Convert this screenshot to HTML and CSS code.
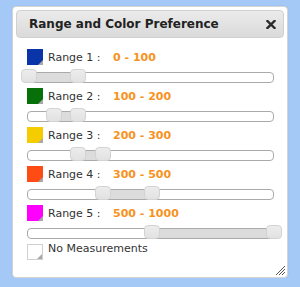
FILE: index.html
```html
<!DOCTYPE html>
<html lang="en">
<head>
    <meta charset="UTF-8">
    <title>Range and Color Preference</title>
    <link rel="stylesheet" href="styles.css">
</head>
<body>
    <div class="dialog">
        <div class="titlebar">
            <span class="title">Range and Color Preference</span>
            <span class="close">
                <svg width="10" height="9" viewBox="0 0 10 9">
                    <path d="M1.5 1 L8.5 8 M8.5 1 L1.5 8" stroke="#2b2b2b" stroke-width="2.4" stroke-linecap="square"/>
                </svg>
            </span>
        </div>

        <div class="content">
            <div class="range">
                <div class="range-head">
                    <span class="swatch" style="background: #0a35a8;"></span>
                    <span class="label">Range 1 :</span>
                    <span class="value">0 - 100</span>
                </div>
                <div class="slider">
                    <div class="slider-range" style="left: 0%; width: 20%;"></div>
                    <span class="handle" style="left: 0%;"></span>
                    <span class="handle" style="left: 20%;"></span>
                </div>
            </div>

            <div class="range">
                <div class="range-head">
                    <span class="swatch" style="background: #087008;"></span>
                    <span class="label">Range 2 :</span>
                    <span class="value">100 - 200</span>
                </div>
                <div class="slider">
                    <div class="slider-range" style="left: 10%; width: 10%;"></div>
                    <span class="handle" style="left: 10%;"></span>
                    <span class="handle" style="left: 20%;"></span>
                </div>
            </div>

            <div class="range">
                <div class="range-head">
                    <span class="swatch" style="background: #f4cc00;"></span>
                    <span class="label">Range 3 :</span>
                    <span class="value">200 - 300</span>
                </div>
                <div class="slider">
                    <div class="slider-range" style="left: 20%; width: 10%;"></div>
                    <span class="handle" style="left: 20%;"></span>
                    <span class="handle" style="left: 30%;"></span>
                </div>
            </div>

            <div class="range">
                <div class="range-head">
                    <span class="swatch" style="background: #ff4b14;"></span>
                    <span class="label">Range 4 :</span>
                    <span class="value">300 - 500</span>
                </div>
                <div class="slider">
                    <div class="slider-range" style="left: 30%; width: 20%;"></div>
                    <span class="handle" style="left: 30%;"></span>
                    <span class="handle" style="left: 50%;"></span>
                </div>
            </div>

            <div class="range">
                <div class="range-head">
                    <span class="swatch" style="background: #ff00ff;"></span>
                    <span class="label">Range 5 :</span>
                    <span class="value">500 - 1000</span>
                </div>
                <div class="slider">
                    <div class="slider-range" style="left: 50%; width: 50%;"></div>
                    <span class="handle" style="left: 50%;"></span>
                    <span class="handle" style="left: 100%;"></span>
                </div>
            </div>

            <div class="none-row">
                <span class="swatch empty"></span>
                <span class="label">No Measurements</span>
            </div>
        </div>

        <svg class="grip" width="11" height="11" viewBox="0 0 11 11">
            <path d="M10 1 L1 10 M10 4 L4 10 M10 7 L7 10" stroke="#555" stroke-width="1"/>
        </svg>
    </div>
</body>
</html>
```

FILE: styles.css
```css
body {
    margin: 0;
    background-color: #a4c9f6;
    font-family: "DejaVu Sans", Verdana, sans-serif;
}

.dialog {
    position: relative;
    box-sizing: border-box;
    width: 276px;
    height: 272px;
    margin: 6px 0 0 12px;
    padding: 3px;
    background-color: #fff;
    border: 1px solid #d4d4d4;
    border-radius: 4px;
    box-shadow: 0 0 2px rgba(0, 0, 0, 0.08);
}

.titlebar {
    box-sizing: border-box;
    height: 28px;
    display: flex;
    align-items: center;
    justify-content: space-between;
    padding: 0 7px 0 12px;
    border: 1px solid #d0d0d0;
    border-radius: 4px;
    background: linear-gradient(#ebebeb, #dadada);
}

.title {
    font-size: 12px;
    font-weight: bold;
    color: #222;
}

.close {
    display: flex;
    margin-top: 1px;
}

.content {
    padding: 11px 10px 0 11px;
}

.range-head,
.none-row {
    display: flex;
    align-items: center;
    height: 16px;
}

.none-row {
    align-items: flex-start;
    height: auto;
    margin-top: 4px;
}

.swatch {
    position: relative;
    flex: none;
    box-sizing: border-box;
    width: 16px;
    height: 16px;
    margin-right: 5px;
}

.swatch::after {
    content: "";
    position: absolute;
    right: 0;
    bottom: 0;
    border-style: solid;
    border-width: 0 0 5px 5px;
    border-color: transparent transparent #a8a8a8 transparent;
}

.swatch.empty {
    background-color: #fff;
    border: 1px solid #d0d0d0;
}

.label {
    width: 65px;
    font-size: 11px;
    color: #333;
    white-space: nowrap;
}

.none-row .label {
    margin-top: -2px;
}

.value {
    font-size: 11px;
    font-weight: bold;
    color: #f7921e;
}

.slider {
    position: relative;
    box-sizing: border-box;
    height: 11px;
    margin: 7px 0 5px;
    background-color: #fff;
    border: 1px solid #aaa;
    border-radius: 4px;
}

.slider-range {
    position: absolute;
    top: 0;
    bottom: 0;
    background-color: #dcdcdc;
}

.handle {
    position: absolute;
    top: -4px;
    box-sizing: border-box;
    width: 16px;
    height: 14px;
    margin-left: -7px;
    background: linear-gradient(#ececec, #e2e2e2);
    border: 1px solid #d3d3d3;
    border-radius: 4px;
}

.grip {
    position: absolute;
    right: 1px;
    bottom: 1px;
}
```
